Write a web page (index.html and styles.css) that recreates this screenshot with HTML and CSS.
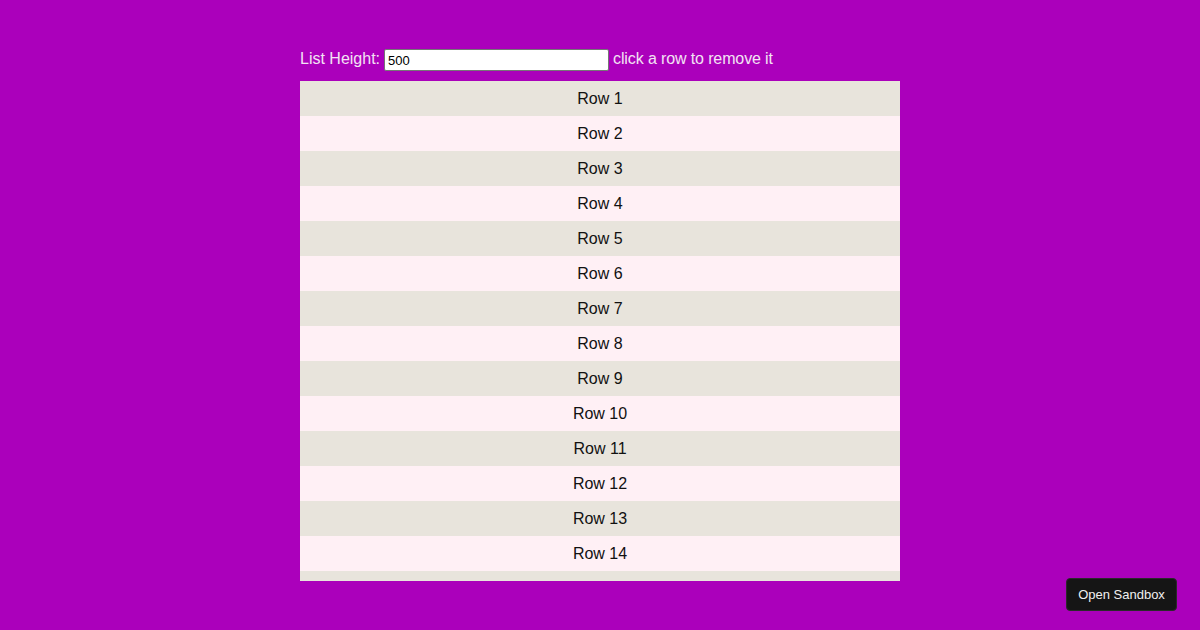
FILE: index.html
```html
<!DOCTYPE html>
<html>
<head>
<meta charset="utf-8">
<link rel="stylesheet" href="styles.css">
</head>
<body>
<div class="app">
  <div class="controls">
    <span class="label">List Height:</span>
    <input class="height-input" type="text" value="500">
    <span class="hint">click a row to remove it</span>
  </div>
  <div class="list">
    <div class="row odd">Row 1</div>
    <div class="row even">Row 2</div>
    <div class="row odd">Row 3</div>
    <div class="row even">Row 4</div>
    <div class="row odd">Row 5</div>
    <div class="row even">Row 6</div>
    <div class="row odd">Row 7</div>
    <div class="row even">Row 8</div>
    <div class="row odd">Row 9</div>
    <div class="row even">Row 10</div>
    <div class="row odd">Row 11</div>
    <div class="row even">Row 12</div>
    <div class="row odd">Row 13</div>
    <div class="row even">Row 14</div>
    <div class="row odd">Row 15</div>
  </div>
</div>
<button class="sandbox-btn">Open Sandbox</button>
</body>
</html>
```
FILE: styles.css
```css
html, body {
  margin: 0;
  padding: 0;
  height: 100%;
}
body {
  background: #ab00bb;
  font-family: "Liberation Sans", Arial, sans-serif;
  overflow: hidden;
}
.app {
  width: 600px;
  margin: 0 auto;
  padding-top: 49px;
}
.controls {
  display: flex;
  align-items: center;
  height: 22px;
  margin-bottom: 10px;
  color: #f3e3f3;
  font-size: 16px;
}
.label,
.hint {
  align-self: flex-start;
  line-height: 19px;
}
.hint {
  letter-spacing: -0.12px;
}
.height-input {
  width: 225px;
  height: 22px;
  box-sizing: border-box;
  margin: 0 4px;
  padding: 1px 3px;
  border: 1px solid #767676;
  border-radius: 2px;
  font-family: "Liberation Sans", Arial, sans-serif;
  font-size: 13px;
  color: #000;
  background: #fff;
}
.list {
  height: 500px;
  overflow: hidden;
}
.row {
  height: 35px;
  display: flex;
  align-items: center;
  justify-content: center;
  font-size: 16px;
  color: #111;
}
.odd {
  background: #e8e4dc;
}
.even {
  background: #fff0f5;
}
.sandbox-btn {
  position: fixed;
  right: 23px;
  bottom: 19px;
  width: 111px;
  height: 33px;
  background: #151515;
  color: #f0f0f0;
  border: 1px solid #2a2a2a;
  border-radius: 4px;
  font-family: "Liberation Sans", Arial, sans-serif;
  font-size: 13px;
  padding: 0;
}
```
